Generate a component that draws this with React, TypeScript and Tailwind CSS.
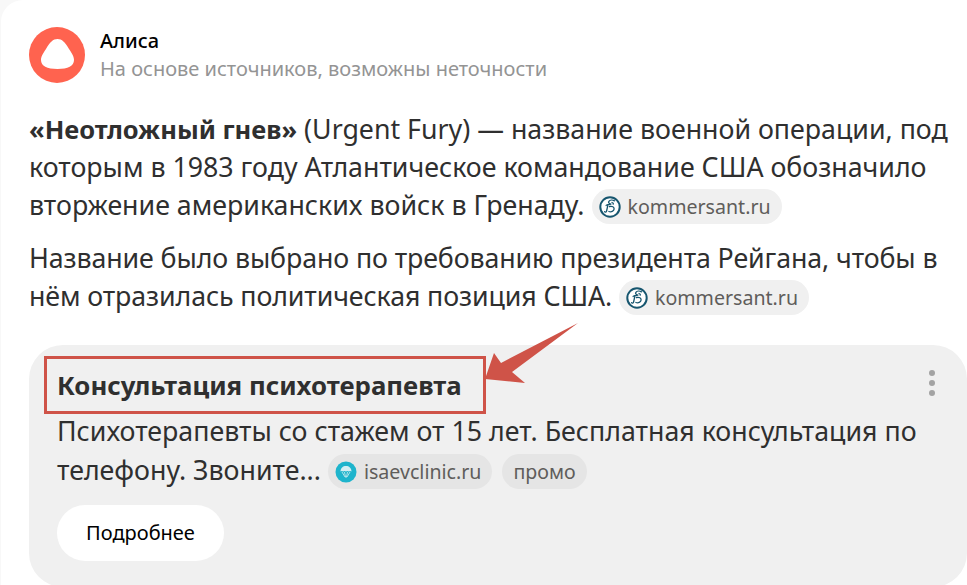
function Kommersant() {
  return (
    <svg width="22" height="22" viewBox="0 0 22 22" className="shrink-0">
      <circle cx="11" cy="11" r="9.700" fill="#fff" stroke="#17566f" strokeWidth="2" />
      <path
        d="M15.500 4.800c-1.800-.9-4.600-.9-5.600.5-.9 1.300.3 2.800 2.500 2.900-2.800 0-5.300.6-5.300 1.400M9 8.600 7.600 15c-.3 1.400-1.700 1.500-2 .6M10.500 10.500c2.800-.6 4.800.5 4.600 2.500-.2 2.200-3 3.500-5.200 2.500M13 6.500c1 .3 1.500 1 1.200 1.700"
        fill="none"
        stroke="#17566f"
        strokeWidth="1.300"
        strokeLinecap="round"
      />
    </svg>
  );
}

function Isaev() {
  return (
    <svg width="22" height="22" viewBox="0 0 22 22" className="shrink-0">
      <circle cx="11" cy="11" r="10.500" fill="#1eb4cc" />
      <path d="M5.500 10.500C5.500 7 8 5 11 5s5.500 2 5.500 5.500c-1-.7-1.800-.7-2.700 0-1-.7-1.800-.7-2.800 0-1-.7-1.800-.7-2.800 0-.9-.7-1.700-.7-2.700 0Z" fill="#d5eef2" />
      <path d="M7 11l3 5h2l3-5M9.500 11l1 5M12.500 11l-1 5" fill="none" stroke="#bfe6ec" strokeWidth=".9" />
    </svg>
  );
}

function Chip({ icon, label, dark, extra }: { icon?: React.ReactNode; label: string; dark?: boolean; extra?: string }) {
  return (
    <span
      className={`-my-[6px] inline-flex h-[35px] -translate-y-px items-center gap-[7px] rounded-full align-middle text-[19.600px] leading-none tracking-normal text-[#5f5d5b] ${
        dark ? "bg-[#e5e5e5]" : "bg-[#f0f0f0]"
      } ${icon ? "pl-[7px] pr-[11px]" : "px-[11px]"} ${extra ?? ""}`}
    >
      {icon}
      {label}
    </span>
  );
}

export default function App() {
  return (
    <div
      className="relative h-[585px] w-[967px] overflow-hidden bg-[#f8f8f8] text-[#2f2f2f]"
      style={{ fontFamily: '"Noto Sans", "Open Sans", sans-serif' }}
    >
      <div className="ml-[1px] h-full rounded-tl-[22px] bg-white pl-[28px] pt-[27px]">
        <header className="flex items-center gap-[15px]">
          <svg width="56" height="56" viewBox="0 0 56 56" className="shrink-0">
            <circle cx="28" cy="28" r="28" fill="#ff634f" />
            <path
              d="M28.500 12C33 12 36 15 40 22c3.500 5 5 8 5 11 0 6-6 9-16.500 9S12 39 12 33c0-3 1.500-6 5-11 4-7 7-10 11.500-10Z"
              fill="#fff"
            />
          </svg>
          <div className="-mt-[1px] flex flex-col">
            <span className="text-[20px] font-medium leading-[28px] text-black">Алиса</span>
            <span className="text-[20px] leading-[28px] text-[#949494]">На основе источников, возможны неточности</span>
          </div>
        </header>

        <p className="mt-[27px] w-[925px] text-[26.750px] leading-[38px]">
          <b className="text-[25.500px] font-bold">«Неотложный гнев»</b> (Urgent Fury) — название военной операции, под которым в 1983 году Атлантическое командование США обозначило вторжение американских войск в Гренаду.{" "}
          <Chip icon={<Kommersant />} label="kommersant.ru" />
        </p>
        <p className="mt-[15px] w-[925px] text-[26.750px] leading-[38px] tracking-[-0.1px]">
          Название было выбрано по требованию президента Рейгана, чтобы в нём отразилась политическая позиция США.{" "}
          <Chip icon={<Kommersant />} label="kommersant.ru" />
        </p>

        <section className="mt-[30px] h-[242px] w-[938px] rounded-[34px] bg-[#f0f0f0] pl-[28px] pt-[22px]">
          <div className="flex items-start justify-between pr-[32px]">
            <h2 className="text-[25.800px] font-bold leading-[36px]">Консультация психотерапевта</h2>
            <div className="mt-[3px] flex flex-col gap-[4px]">
              <i className="h-[6px] w-[6px] rounded-full bg-[#a3a3a3]" />
              <i className="h-[6px] w-[6px] rounded-full bg-[#a3a3a3]" />
              <i className="h-[6px] w-[6px] rounded-full bg-[#a3a3a3]" />
            </div>
          </div>
          <p className="mt-[8px] w-[880px] text-[26.750px] leading-[39px]">
            Психотерапевты со стажем от 15 лет. Бесплатная консультация по телефону. Звоните...{" "}
            <Chip dark icon={<Isaev />} label="isaevclinic.ru" />{" "}
            <Chip dark label="промо" extra="ml-[3px]" />
          </p>
          <button className="mt-[16px] h-[56px] w-[167px] rounded-full bg-white text-[20px] text-black">Подробнее</button>
        </section>
      </div>

      <div className="absolute left-[44px] top-[356px] h-[58px] w-[442px] border-[3px] border-[#cf5348]" />
      <svg className="absolute left-[480px] top-[320px]" width="104" height="70" viewBox="0 0 104 70">
        <path d="M5 59 14 33 21 43 98 3 32 52 45 63Z" fill="#cf5348" />
      </svg>
    </div>
  );
}
